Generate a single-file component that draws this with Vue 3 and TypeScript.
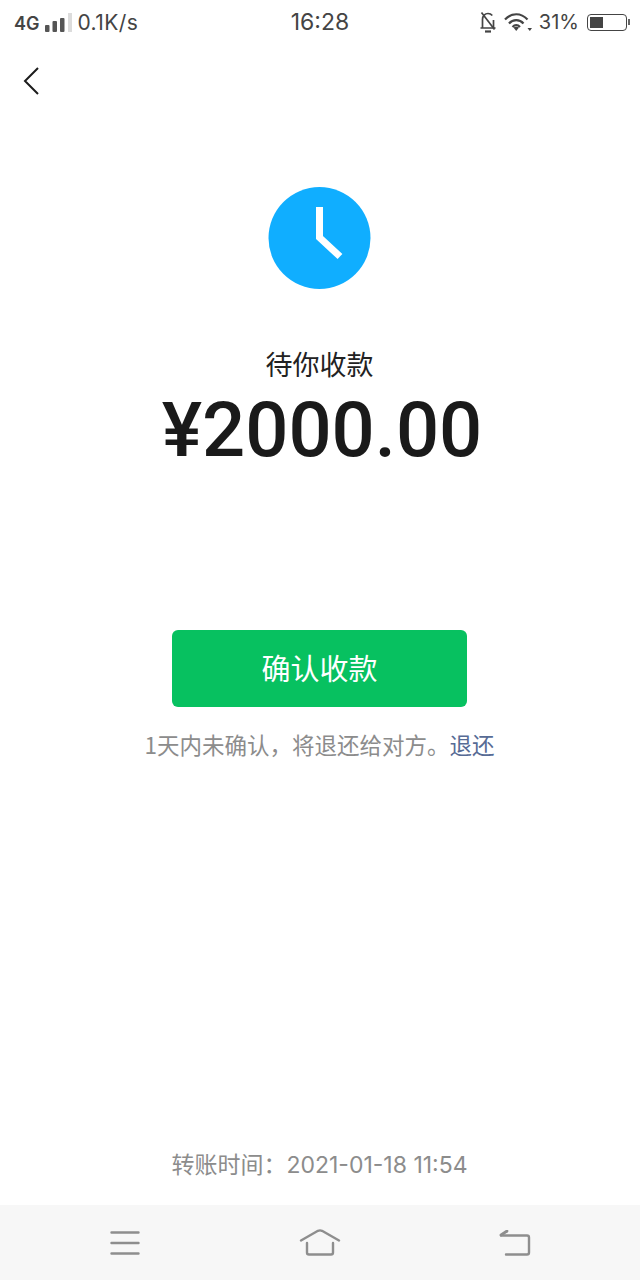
<script setup lang="ts">
const navColor = '#8e8e8e'
</script>

<template>
  <div class="page">
    <div class="status-bar">
      <div class="status-left">
        <span class="net">4G</span>
        <svg class="signal" width="27" height="19" viewBox="0 0 27 19">
          <rect x="0" y="12" width="4.500" height="7" rx="1" fill="#555" />
          <rect x="7.500" y="8" width="4.500" height="11" rx="1" fill="#555" />
          <rect x="15" y="5" width="4.500" height="14" rx="1" fill="#555" />
          <rect x="23" y="0" width="4" height="19" fill="#dcdcdc" />
        </svg>
        <span class="speed">0.1K/s</span>
      </div>
      <div class="status-time">16:28</div>
      <div class="status-right">
        <svg class="bell" width="18" height="22" viewBox="0 0 18 22" fill="none" stroke="#444" stroke-width="1.700">
          <path d="M3.500 16.500V8.500c0-3.500 2.500-6 5.500-6 1.800 0 3.300.8 4.300 2M14.500 9v7.500M1.500 17h15" />
          <path d="M2.500 1.500l13 17" />
          <path d="M6 20.500h6" stroke-width="2.200" />
        </svg>
        <svg class="wifi" width="28" height="20" viewBox="0 0 28 20" fill="none" stroke="#444" stroke-width="2.200">
          <path d="M1 7.500c6.500-7 16-7 22.500 0" />
          <path d="M5 11.500c4-4.500 10.500-4.500 14.500 0" />
          <path d="M8.500 15c2.300-2.400 5.200-2.400 7.500 0" />
          <path d="M9.500 15.500L12.200 19l2.800-3.500c-1.600-1-4-1-5.500 0z" fill="#444" stroke="none" />
          <path d="M23.500 16h4.500l-2.200 3z" fill="#444" stroke="none" />
        </svg>
        <span class="battery-pct">31%</span>
        <div class="battery">
          <div class="battery-fill"></div>
        </div>
        <div class="battery-cap"></div>
      </div>
    </div>

    <div class="header">
      <svg width="16" height="28" viewBox="0 0 16 28" fill="none" stroke="#1c1c1c" stroke-width="2">
        <path d="M15 1L2 14l13 13" />
      </svg>
    </div>

    <div class="main">
      <svg class="clock" width="103" height="102" viewBox="0 0 103 102">
        <circle cx="51.500" cy="51" r="51" fill="#10aeff" />
        <path d="M51.500 20v30.500l20.500 19" fill="none" stroke="#fff" stroke-width="7" />
      </svg>
      <div class="title">待你收款</div>
      <div class="amount">¥2000.00</div>
      <button class="confirm">确认收款</button>
      <div class="hint">1天内未确认，将退还给对方。<span class="refund">退还</span></div>
    </div>

    <div class="time-row">转账时间：2021-01-18 11:54</div>

    <div class="nav-bar">
      <svg width="32" height="26" viewBox="0 0 32 26" fill="none" :stroke="navColor" stroke-width="2.400" stroke-linecap="round">
        <path d="M2.500 2.500h27M2.500 13h27M2.500 23.500h27" />
      </svg>
      <svg width="44" height="28" viewBox="0 0 44 28" fill="none" :stroke="navColor" stroke-width="2.400" stroke-linecap="round" stroke-linejoin="round">
        <path d="M3 11.500L20 1.800c1.300-.6 2.700-.6 4 0l17 9.700" />
        <path d="M9 14v9.500c0 1.300.7 2 2 2h22c1.300 0 2-.7 2-2V14" />
      </svg>
      <svg width="32" height="26" viewBox="0 0 32 26" fill="none" :stroke="navColor" stroke-width="2.400" stroke-linecap="round" stroke-linejoin="round">
        <path d="M2 5.500h26c1.300 0 2 .7 2 2v15c0 1.300-.7 2-2 2H7" />
        <path d="M8 1L2 5" stroke-width="2.800" />
      </svg>
    </div>
  </div>
</template>

<style>
html,
body {
  margin: 0;
  background: #fff;
}
</style>

<style scoped>
.page {
  width: 640px;
  height: 1280px;
  display: flex;
  flex-direction: column;
  background: #fff;
  font-family: 'Noto Sans CJK SC', 'Noto Sans', sans-serif;
  overflow: hidden;
}

.status-bar {
  height: 44px;
  display: grid;
  grid-template-columns: 1fr auto 1fr;
  align-items: center;
  padding: 0 10px;
  color: #444;
  font-family: Inter, 'Noto Sans', sans-serif;
  font-size: 20px;
}

.status-left {
  display: flex;
  align-items: center;
  padding-left: 4px;
}

.net {
  margin-top: 2px;
  font-weight: 600;
  font-size: 18px;
}

.signal {
  margin: 0 5px 0 6px;
}

.speed {
  font-size: 21px;
  letter-spacing: 0.4px;
}

.status-time {
  font-size: 23px;
}

.status-right {
  display: flex;
  align-items: center;
  justify-content: flex-end;
}

.bell {
  margin-right: 7px;
}

.wifi {
  margin-right: 7px;
}

.battery {
  box-sizing: border-box;
  width: 40px;
  height: 17px;
  margin-left: 8px;
  padding: 2px;
  border: 1.500px solid #444;
  border-radius: 4px;
}

.battery-fill {
  width: 13px;
  height: 100%;
  background: #444;
}

.battery-cap {
  width: 2px;
  height: 6px;
  background: #666;
  margin-left: 1px;
}

.header {
  height: 74px;
  padding-left: 23px;
  display: flex;
  align-items: center;
}

.main {
  flex: 1;
  display: flex;
  flex-direction: column;
  align-items: center;
  padding-top: 69px;
  padding-right: 1px;
}

.title {
  margin-top: 56px;
  font-size: 27px;
  line-height: 38px;
  color: #222;
}

.amount {
  margin-top: 6px;
  margin-left: 5px;
  font-family: Roboto, 'Noto Sans CJK SC', sans-serif;
  font-size: 76px;
  line-height: 82px;
  font-weight: 500;
  color: #1a1a1a;
}

.confirm {
  width: 295px;
  height: 77px;
  margin-top: 159px;
  padding: 0 0 3px;
  border: none;
  border-radius: 6px;
  background: #07c160;
  color: #fff;
  font-family: inherit;
  font-size: 29px;
}

.hint {
  margin-top: 21px;
  font-size: 22.500px;
  line-height: 32px;
  color: #8c8c8c;
}

.refund {
  color: #576b95;
}

.time-row {
  margin-bottom: 22px;
  padding-right: 1px;
  text-align: center;
  font-family: Inter, 'Noto Sans CJK SC', sans-serif;
  font-size: 23px;
  line-height: 36px;
  color: #8c8c8c;
}

.nav-bar {
  height: 75px;
  display: flex;
  justify-content: space-between;
  align-items: center;
  padding: 0 109px;
  background: #f7f7f7;
}
</style>
